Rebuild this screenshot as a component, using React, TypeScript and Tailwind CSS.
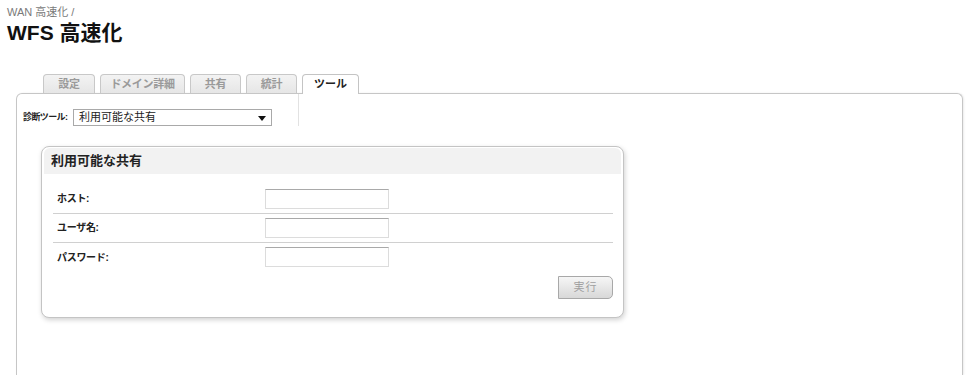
const font = "font-['Liberation_Sans','Noto_Sans_CJK_JP',sans-serif]";

const tabs = ["設定", "ドメイン詳細", "共有", "統計", "ツール"];

const fields = ["ホスト:", "ユーザ名:", "パスワード:"];

export default function App() {
  return (
    <div className={`${font} w-[976px] h-[375px] overflow-hidden bg-white pt-[6px]`}>
      <div className="pl-[7px]">
        <div className="text-[11px] leading-[13px] h-[13px] text-[#7a7a7a]">WAN 高速化 /</div>
        <h1 className="mt-[2px] text-[21px] leading-[24px] h-[24px] font-bold text-[#111]">WFS 高速化</h1>
      </div>

      <div className="ml-[16px] w-[947px]">
        {/* tabs */}
        <div className="mt-[29px] pl-[27px] flex items-end gap-[5px] h-[19px]">
          {tabs.map((t, i) =>
            i === tabs.length - 1 ? (
              <div
                key={t}
                className="relative z-10 mb-[-1px] h-[20px] w-[57px] border border-b-0 border-[#c4c4c4] rounded-t-[4px] bg-white flex items-center justify-center text-[11px] font-bold text-[#222]"
              >
                {t}
              </div>
            ) : (
              <div
                key={t}
                className={`h-[19px] ${i === 1 ? "w-[85px]" : i === 0 ? "w-[52px]" : "w-[51px]"} border border-b-0 border-[#c8c8c8] rounded-t-[4px] bg-gradient-to-b from-[#f3f3f3] to-[#e6e6e6] flex items-center justify-center text-[11px] font-bold text-[#9a9a9a] tracking-[-0.3px]`}
              >
                {t}
              </div>
            )
          )}
        </div>

        {/* panel */}
        <div className="h-[282px] border border-b-0 border-[#c6c6c6] rounded-t-[6px] shadow-[1px_0_2px_rgba(0,0,0,0.08)]">
          <div className="flex">
            <div className="w-[282px] h-[32px] border-r border-[#e2e2e2] pt-[15px] pl-[6px]">
              <div className="flex items-center h-[17px]">
                <span className="w-[50px] text-[9px] font-bold tracking-[-0.6px] text-[#222] whitespace-nowrap">診断ツール:</span>
                <div className="relative w-[199px] h-[17px] border border-[#a9a9a9] bg-white flex items-center pl-[5px] text-[11px] text-[#222]">
                  利用可能な共有
                  <svg className="absolute right-[5px] top-[6px]" width="8" height="5" viewBox="0 0 8 5">
                    <path d="M0 0h8L4 5z" fill="#111" />
                  </svg>
                </div>
              </div>
            </div>
          </div>

          {/* card */}
          <div className="mt-[20px] ml-[24px] w-[583px] h-[172px] border border-[#c4c4c4] rounded-[8px] bg-white shadow-[1px_2px_5px_rgba(0,0,0,0.18)]">
            <div className="mx-[2px] mt-[1px] h-[26px] bg-[#f2f2f2] rounded-t-[6px] pl-[7px] flex items-center text-[13px] font-bold text-[#222]">
              利用可能な共有
            </div>
            <div className="mt-[11px] ml-[11px] w-[560px]">
              {fields.map((f, i) => (
                <div
                  key={f}
                  className={`flex items-center h-[29px] pb-[1px] ${i < fields.length - 1 ? "border-b border-[#d0d0d0]" : ""}`}
                >
                  <span className="w-[212px] pl-[4px] text-[10px] font-bold text-[#222] tracking-[-0.3px]">{f}</span>
                  <input
                    type="text"
                    className="w-[124px] h-[20px] border border-[#dcdcdc] border-t-[#a9a9a9] bg-white outline-none"
                  />
                </div>
              ))}
              <div className="flex justify-end mt-[4px]">
                <button className="w-[55px] h-[23px] border border-[#a8a8a8] rounded-r-[5px] bg-gradient-to-b from-[#f6f6f6] to-[#d8d8d8] text-[11px] text-[#a0a0a0] tracking-[1px]">
                  実行
                </button>
              </div>
            </div>
          </div>
        </div>
      </div>
    </div>
  );
}
